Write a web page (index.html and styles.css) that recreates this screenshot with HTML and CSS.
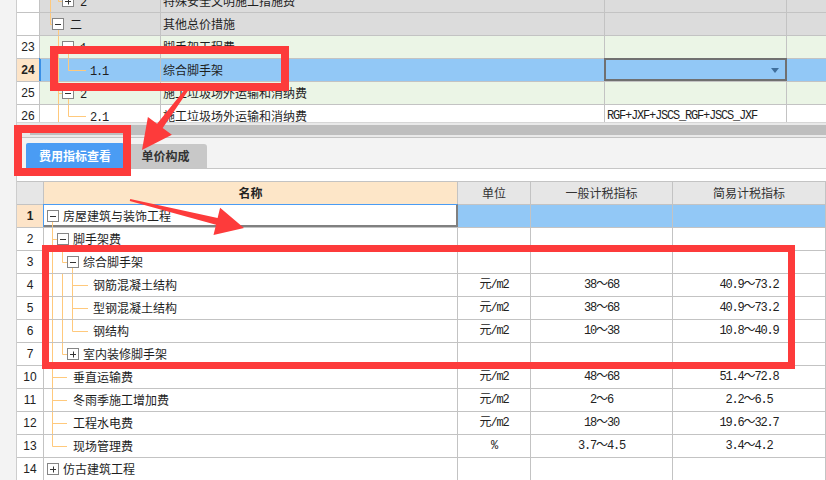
FILE: index.html
```html
<!DOCTYPE html>
<html lang="zh-CN">
<head>
<meta charset="utf-8">
<title>费用指标查看</title>
<link rel="stylesheet" href="styles.css">
</head>
<body>
<svg class="defs" width="0" height="0" aria-hidden="true">
  <symbol id="bm" viewBox="0 0 12 12"><rect x=".5" y=".5" width="11" height="11" fill="#fff" stroke="#858585"/><path d="M3 6.5h6" stroke="#333"/></symbol>
  <symbol id="bp" viewBox="0 0 12 12"><rect x=".5" y=".5" width="11" height="11" fill="#fff" stroke="#858585"/><path d="M3 6.5h6M6.5 3.5v6" stroke="#333"/></symbol>
</svg>
<div class="app">
  <div class="top">
    <div class="top-rows">
      <div class="row gray">
        <div class="c n"></div>
        <div class="c t"><svg class="tl" width="120" height="22"><path class="ln" d="M10.5 0V22M18.5 0V11.5H22"/><use href="#bp" x="22" y="5" width="12" height="12"/></svg><span class="tx i40 mono">2</span></div>
        <div class="c nm">特殊安全文明施工措施费</div>
        <div class="c"></div>
        <div class="c e"></div>
      </div>
      <div class="row gray">
        <div class="c n"></div>
        <div class="c t"><svg class="tl" width="120" height="22"><path class="ln" d="M10.5 0V11.5H12M18.5 17V22"/><use href="#bm" x="12" y="5" width="12" height="12"/></svg><span class="tx i30">二</span></div>
        <div class="c nm">其他总价措施</div>
        <div class="c"></div>
        <div class="c e"></div>
      </div>
      <div class="row green">
        <div class="c n">23</div>
        <div class="c t"><svg class="tl" width="120" height="22"><path class="ln" d="M18.5 0V22M18.5 11.5H22M28.5 17V22"/><use href="#bm" x="22" y="5" width="12" height="12"/></svg><span class="tx i40 mono">1</span></div>
        <div class="c nm">脚手架工程费</div>
        <div class="c"></div>
        <div class="c e"></div>
      </div>
      <div class="row sel">
        <div class="c n cur">24</div>
        <div class="c t mark"><svg class="tl" width="120" height="22"><path class="ln" d="M18.5 0V22M28.5 0V11.5H46"/></svg><span class="tx i50 mono">1.1</span></div>
        <div class="c nm">综合脚手架</div>
        <div class="c dd"><span class="caret"></span></div>
        <div class="c e"></div>
      </div>
      <div class="row green">
        <div class="c n">25</div>
        <div class="c t"><svg class="tl" width="120" height="22"><path class="ln" d="M18.5 0V22M18.5 11.5H22M28.5 17V22"/><use href="#bm" x="22" y="5" width="12" height="12"/></svg><span class="tx i40 mono">2</span></div>
        <div class="c nm">施工垃圾场外运输和消纳费</div>
        <div class="c"></div>
        <div class="c e"></div>
      </div>
      <div class="row">
        <div class="c n">26</div>
        <div class="c t"><svg class="tl" width="120" height="22"><path class="ln" d="M18.5 0V22M28.5 0V11.5H46"/></svg><span class="tx i50 mono">2.1</span></div>
        <div class="c nm">施工垃圾场外运输和消纳费</div>
        <div class="c mono f">RGF+JXF+JSCS_RGF+JSCS_JXF</div>
        <div class="c e"></div>
      </div>
    </div>
  </div>

  <div class="hscroll">
    <div class="hs-btn"><span class="hs-tri"></span></div>
    <div class="hs-thumb"></div>
  </div>

  <div class="tabbar">
    <div class="tab on">费用指标查看</div>
    <div class="tab">单价构成</div>
  </div>

  <div class="gap"></div>

  <div class="low">
    <div class="row hd">
      <div class="c n"></div>
      <div class="c nmh">名称</div>
      <div class="c">单位</div>
      <div class="c">一般计税指标</div>
      <div class="c">简易计税指标</div>
    </div>
    <div class="row sel">
      <div class="c n cur">1</div>
      <div class="c t focus"><svg class="tl" width="413" height="22"><path class="ln" d="M8.5 17V22"/><use href="#bm" x="3" y="5" width="12" height="12"/></svg><span class="tx i19">房屋建筑与装饰工程</span></div>
      <div class="c"></div>
      <div class="c"></div>
      <div class="c"></div>
    </div>
    <div class="row">
      <div class="c n">2</div>
      <div class="c t"><svg class="tl" width="413" height="22"><path class="ln" d="M8.5 0V22M8.5 11.5H13M18.5 17V22"/><use href="#bm" x="13" y="5" width="12" height="12"/></svg><span class="tx i29">脚手架费</span></div>
      <div class="c"></div>
      <div class="c"></div>
      <div class="c"></div>
    </div>
    <div class="row">
      <div class="c n">3</div>
      <div class="c t"><svg class="tl" width="413" height="22"><path class="ln" d="M8.5 0V22M18.5 0V11.5H23M28.5 17V22"/><use href="#bm" x="23" y="5" width="12" height="12"/></svg><span class="tx i39">综合脚手架</span></div>
      <div class="c"></div>
      <div class="c"></div>
      <div class="c"></div>
    </div>
    <div class="row">
      <div class="c n">4</div>
      <div class="c t"><svg class="tl" width="413" height="22"><path class="ln" d="M8.5 0V22M18.5 0V22M28.5 0V22M28.5 11.5H44"/></svg><span class="tx i49">钢筋混凝土结构</span></div>
      <div class="c v mono">元/m2</div>
      <div class="c v mono">38～68</div>
      <div class="c v mono">40.9～73.2</div>
    </div>
    <div class="row">
      <div class="c n">5</div>
      <div class="c t"><svg class="tl" width="413" height="22"><path class="ln" d="M8.5 0V22M18.5 0V22M28.5 0V22M28.5 11.5H44"/></svg><span class="tx i49">型钢混凝土结构</span></div>
      <div class="c v mono">元/m2</div>
      <div class="c v mono">38～68</div>
      <div class="c v mono">40.9～73.2</div>
    </div>
    <div class="row">
      <div class="c n">6</div>
      <div class="c t"><svg class="tl" width="413" height="22"><path class="ln" d="M8.5 0V22M18.5 0V22M28.5 0V11.5H44"/></svg><span class="tx i49">钢结构</span></div>
      <div class="c v mono">元/m2</div>
      <div class="c v mono">10～38</div>
      <div class="c v mono">10.8～40.9</div>
    </div>
    <div class="row">
      <div class="c n">7</div>
      <div class="c t"><svg class="tl" width="413" height="22"><path class="ln" d="M8.5 0V22M18.5 0V11.5H23"/><use href="#bp" x="23" y="5" width="12" height="12"/></svg><span class="tx i39">室内装修脚手架</span></div>
      <div class="c"></div>
      <div class="c"></div>
      <div class="c"></div>
    </div>
    <div class="row">
      <div class="c n">10</div>
      <div class="c t"><svg class="tl" width="413" height="22"><path class="ln" d="M8.5 0V22M8.5 11.5H23"/></svg><span class="tx i29">垂直运输费</span></div>
      <div class="c v mono">元/m2</div>
      <div class="c v mono">48～68</div>
      <div class="c v mono">51.4～72.8</div>
    </div>
    <div class="row">
      <div class="c n">11</div>
      <div class="c t"><svg class="tl" width="413" height="22"><path class="ln" d="M8.5 0V22M8.5 11.5H23"/></svg><span class="tx i29">冬雨季施工增加费</span></div>
      <div class="c v mono">元/m2</div>
      <div class="c v mono">2～6</div>
      <div class="c v mono">2.2～6.5</div>
    </div>
    <div class="row">
      <div class="c n">12</div>
      <div class="c t"><svg class="tl" width="413" height="22"><path class="ln" d="M8.5 0V22M8.5 11.5H23"/></svg><span class="tx i29">工程水电费</span></div>
      <div class="c v mono">元/m2</div>
      <div class="c v mono">18～30</div>
      <div class="c v mono">19.6～32.7</div>
    </div>
    <div class="row">
      <div class="c n">13</div>
      <div class="c t"><svg class="tl" width="413" height="22"><path class="ln" d="M8.5 0V11.5H23"/></svg><span class="tx i29">现场管理费</span></div>
      <div class="c v mono">%</div>
      <div class="c v mono">3.7～4.5</div>
      <div class="c v mono">3.4～4.2</div>
    </div>
    <div class="row">
      <div class="c n">14</div>
      <div class="c t"><svg class="tl" width="413" height="22"><use href="#bp" x="3" y="5" width="12" height="12"/></svg><span class="tx i19">仿古建筑工程</span></div>
      <div class="c"></div>
      <div class="c"></div>
      <div class="c"></div>
    </div>
  </div>
</div>

<div class="ov">
  <div class="rb rb1"></div>
  <div class="rb rb2"></div>
  <div class="rb rb3"></div>
  <svg class="arrows" width="826" height="480" viewBox="0 0 826 480">
    <polygon points="186.8,87.1 157.1,123.8 147.9,117 142,150 171.9,134.8 162.7,128 189.2,88.9"/>
    <polygon points="130.2,199 217.6,217.9 220.1,207.7 244,228 213.5,234.9 216,224.7 129.8,201"/>
  </svg>
</div>
</body>
</html>
```

FILE: styles.css
```css
* { box-sizing: border-box; margin: 0; padding: 0; }
html, body { width: 826px; height: 480px; overflow: hidden; }
body {
  position: relative;
  background: #f3f3f3;
  font-family: "Noto Sans CJK SC", "Noto Sans", sans-serif;
  font-size: 12px;
  color: #1e1e1e;
}
.defs { position: absolute; width: 0; height: 0; overflow: hidden; }

.app {
  margin-left: 16px;
  border-left: 1px solid #cdcdcd;
  height: 480px;
  display: flex;
  flex-direction: column;
}

.mono {
  font-family: "Liberation Mono", "Noto Sans CJK SC", monospace;
  letter-spacing: -1.2px;
}

/* grid rows */
.row { display: grid; height: 23px; }
.top .row { grid-template-columns: 23px 121px 444px 182px 1fr; }
.low .row { grid-template-columns: 27px 414px 73px 142px 1fr; }

.c {
  position: relative;
  border-top: 1px solid #c3c3c3;
  border-right: 1px solid #c3c3c3;
  line-height: 22px;
  white-space: nowrap;
  overflow: hidden;
}
.c.e { border-right: none; }
.n {
  background: #fff;
  text-align: center;
  font-family: "Liberation Sans", Arial, sans-serif;
  font-size: 12px;
  color: #222;
}
.n.cur { background: #fde4c8; font-weight: bold; }

/* top grid */
.top {
  flex: none;
  height: 123px;
  overflow: hidden;
  background: #fff;
  border-bottom: 1px solid #d6d6d6;
}
.top-rows { margin-top: -11px; }
.gray .c:not(.n) { background: #dcdcdc; }
.green .c:not(.n) { background: #ebf5e6; }
.top .sel .c:not(.n) { background: #92c8f6; }
.nm { padding-left: 2px; }
.f { padding-left: 2px; }

.mark { box-shadow: -1px 0 0 #3a8ee6, inset 1px 0 0 #3a8ee6; }

.top .sel .dd {
  background: #fff;
  border-top-color: #707070;
  border-right-color: #707070;
  box-shadow: -1px 0 0 #707070, inset 1px 0 0 #707070, inset 0 1px 0 #707070, inset -1px 0 0 #707070, inset 0 -2px 0 #707070;
  display: flex;
  align-items: center;
  justify-content: flex-end;
  padding-right: 7px;
}
.caret {
  width: 0; height: 0;
  border-left: 4px solid transparent;
  border-right: 4px solid transparent;
  border-top: 5px solid #3f6f9c;
  margin-top: 1px;
}

/* tree */
.tl { position: absolute; left: 0; top: 0; }
.ln { stroke: #ffc97c; stroke-width: 1; fill: none; }
.tx { position: relative; display: inline-block; }
.i19 { margin-left: 19px; }
.i29 { margin-left: 29px; }
.i30 { margin-left: 30px; }
.i39 { margin-left: 39px; }
.i40 { margin-left: 40px; }
.i49 { margin-left: 49px; }
.i50 { margin-left: 50px; }

/* horizontal scrollbar */
.hscroll {
  flex: none;
  height: 15px;
  background: #e9e9e9;
  border-bottom: 1px solid #c2c2c2;
  display: flex;
  align-items: flex-start;
}
.hs-btn {
  width: 13px;
  height: 14px;
  display: flex;
  align-items: center;
  justify-content: center;
}
.hs-tri {
  width: 0; height: 0;
  border-top: 2px solid transparent;
  border-bottom: 2px solid transparent;
  border-right: 3px solid #666;
}
.hs-thumb {
  flex: 1;
  height: 10px;
  margin-top: 2px;
  background: #bebebe;
}

/* tabs */
.tabbar {
  flex: none;
  height: 31px;
  border-bottom: 1px solid #c6c6c6;
  display: flex;
  align-items: flex-end;
  padding-left: 9px;
}
.tab {
  height: 24px;
  width: 83px;
  background: #c8c8c8;
  border-radius: 3px 3px 0 0;
  text-align: center;
  line-height: 24px;
  font-weight: bold;
  color: #333;
}
.tab.on {
  width: 98px;
  height: 25px;
  line-height: 25px;
  background: #4a9cf4;
  color: #fff;
  border-radius: 2px 2px 0 0;
}

.gap { flex: none; height: 12px; background: #fff; }

/* lower grid */
.low { flex: 1; background: #fff; }
.hd .c { background: #e6e6e6; text-align: center; color: #333; }
.hd .nmh { background: #fde6c8; font-weight: bold; color: #222; }
.low .sel .c:not(.n):not(.focus) { background: #92c8f6; }
.focus {
  background: #fff;
  border-top-color: #4a9cf4;
  border-right-color: #808080;
  box-shadow: -1px 0 0 #4a9cf4, inset -1px 0 0 #808080, inset 0 -2px 0 #808080;
}
.v { text-align: center; color: #222; }

/* annotations */
.ov {
  position: absolute;
  left: 0; top: 0;
  width: 826px; height: 480px;
  pointer-events: none;
}
.rb { position: absolute; border: 8px solid #fd3b3b; }
.rb1 { left: 50px; top: 46px; width: 239px; height: 45px; }
.rb2 { left: 14px; top: 125px; width: 117px; height: 51px; }
.rb3 { left: 42px; top: 245px; width: 753px; height: 124px; border-width: 7px; }
.arrows { position: absolute; left: 0; top: 0; }
.arrows polygon { fill: #fd3b3b; }
```
